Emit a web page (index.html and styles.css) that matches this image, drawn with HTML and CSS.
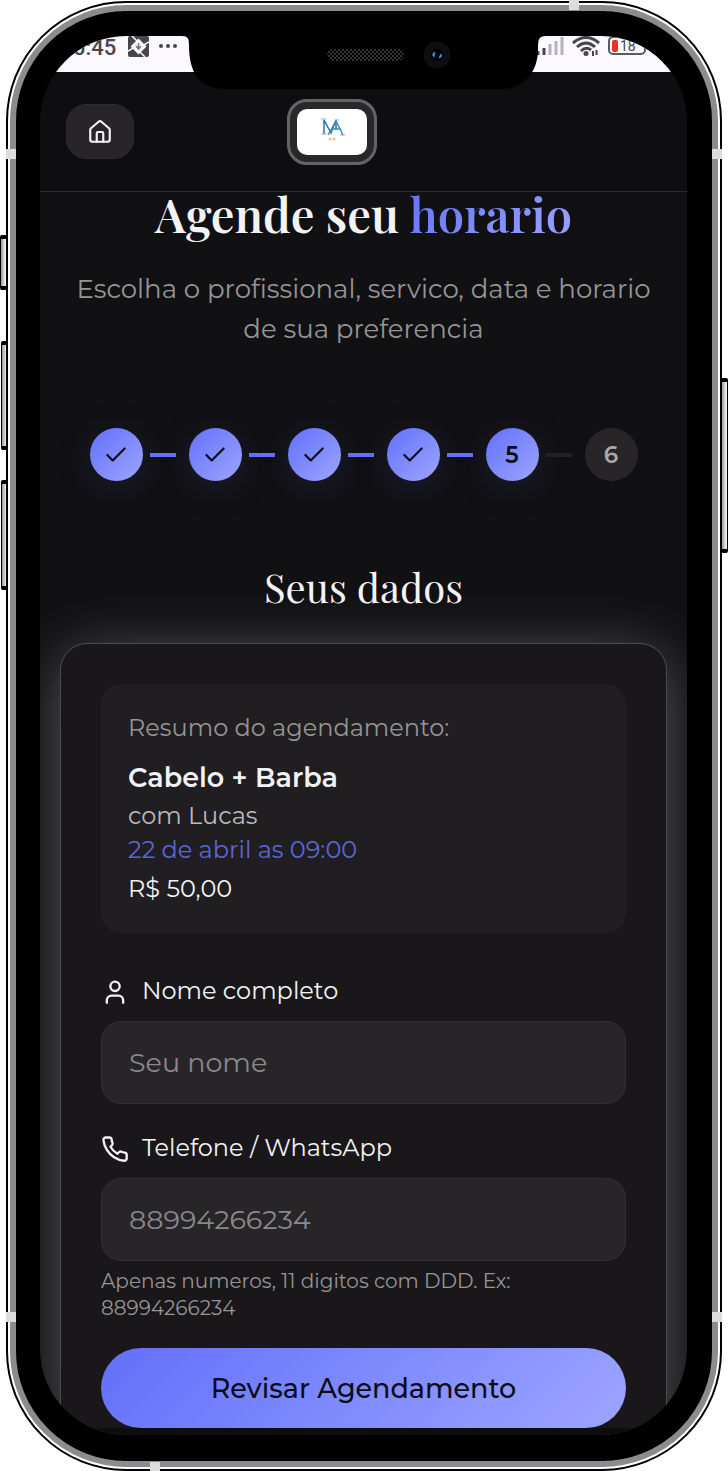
FILE: index.html
```html
<!DOCTYPE html>
<html lang="pt-BR">
<head>
    <meta charset="UTF-8">
    <meta name="viewport" content="width=device-width, initial-scale=1.0">
    <title>Agende seu horario</title>
    <link rel="stylesheet" href="styles.css">
</head>
<body>
    <div class="phone">
        <span class="side-button mute"></span>
        <span class="side-button volume-up"></span>
        <span class="side-button volume-down"></span>
        <span class="side-button power"></span>

        <div class="frame">
            <div class="bezel">
                <div class="screen">
                    <div class="status-bar">
                        <span class="clock">0:45</span>
                        <svg class="status-app" width="21" height="21" viewBox="0 0 21 21">
                            <rect width="21" height="21" rx="2" fill="#47464a"/>
                            <path d="M10.500 2.500l8 8-8 8-8-8z" fill="#fbf9ff"/>
                            <path d="M4 0l6 6M21 6l-7 4M17 21l-6-6M0 15l7-4" stroke="#fbf9ff" stroke-width="1.500"/>
                            <path d="M10.500 7v6M8 10l2.500 3 2.500-3" fill="none" stroke="#77767a" stroke-width="1.500"/>
                        </svg>
                        <svg class="status-dots" width="20" height="6" viewBox="0 0 20 6" fill="#47464a">
                            <circle cx="3" cy="3" r="2"/><circle cx="10" cy="3" r="2"/><circle cx="17" cy="3" r="2"/>
                        </svg>
                        <svg class="status-signal" width="28" height="18" viewBox="0 0 28 18">
                            <path d="M2 18v-4M8 18v-7" stroke="#47464a" stroke-width="3"/>
                            <path d="M14 18V7M20 18V4M26 18V0" stroke="#b5b3b9" stroke-width="3"/>
                        </svg>
                        <svg class="status-wifi" width="28" height="21" viewBox="0 0 28 21" fill="none" stroke="#47464a" stroke-width="3">
                            <path d="M1 7Q14-4 27 7M5 11Q14 3 23 11M9 15Q14 10 19 14"/>
                            <circle cx="14" cy="17.500" r="2.500" fill="#47464a" stroke="none"/>
                            <path d="M21 15v5M24.500 14v5" stroke-width="2"/>
                        </svg>
                        <span class="battery"><i></i>18</span>
                    </div>

                    <header class="topbar">
                        <button class="home-button" type="button" aria-label="Inicio">
                            <svg width="26" height="26" viewBox="0 0 24 24" fill="none" stroke="currentColor" stroke-width="2" stroke-linecap="round" stroke-linejoin="round">
                                <path d="M15 21v-8a1 1 0 0 0-1-1h-4a1 1 0 0 0-1 1v8"/>
                                <path d="M3 10a2 2 0 0 1 .7-1.500l7-6a2 2 0 0 1 2.600 0l7 6A2 2 0 0 1 21 10v9a2 2 0 0 1-2 2H5a2 2 0 0 1-2-2z"/>
                            </svg>
                        </button>
                        <a class="brand" href="#" aria-label="MA">
                            <svg width="70" height="46" viewBox="0 0 70 46" fill="none">
                                <path d="M27 11v14M27 11l7 13 5-13M39 11v10" stroke="#2d70a5" stroke-width="1.500"/>
                                <path d="M31 26l8-14 7 14M35 20h9" stroke="#3e8dbd" stroke-width="1.500"/>
                                <path d="M24 10h5M38 11h4M25 25h4M43 26h5" stroke="#7badd0"/>
                                <circle cx="33" cy="30" r="1.500" fill="#eec07d"/>
                                <circle cx="37" cy="30" r="1.500" fill="#eec07d"/>
                            </svg>
                        </a>
                        <span class="topbar-end"></span>
                    </header>

                    <main class="content">
                        <h1>Agende seu <span>horario</span></h1>
                        <p class="subtitle">Escolha o profissional, servico, data e horario de sua preferencia</p>

                        <div class="steps">
                            <span class="step done"><svg width="26" height="26" viewBox="0 0 24 24"><path d="M20 6L9 17l-5-5"/></svg></span>
                            <span class="line done"></span>
                            <span class="step done"><svg width="26" height="26" viewBox="0 0 24 24"><path d="M20 6L9 17l-5-5"/></svg></span>
                            <span class="line done"></span>
                            <span class="step done"><svg width="26" height="26" viewBox="0 0 24 24"><path d="M20 6L9 17l-5-5"/></svg></span>
                            <span class="line done"></span>
                            <span class="step done"><svg width="26" height="26" viewBox="0 0 24 24"><path d="M20 6L9 17l-5-5"/></svg></span>
                            <span class="line done"></span>
                            <span class="step done">5</span>
                            <span class="line"></span>
                            <span class="step">6</span>
                        </div>

                        <h2>Seus dados</h2>

                        <form class="card">
                            <div class="summary">
                                <p class="summary-title">Resumo do agendamento:</p>
                                <p class="summary-service">Cabelo + Barba</p>
                                <p class="summary-pro">com Lucas</p>
                                <p class="summary-date">22 de abril as 09:00</p>
                                <p class="summary-price">R$ 50,00</p>
                            </div>

                            <div class="field">
                                <label for="nome">
                                    <svg width="28" height="28" viewBox="0 0 24 24"><circle cx="12" cy="8" r="4"/><path d="M19 22v-2a4 4 0 0 0-4-4H9a4 4 0 0 0-4 4v2"/></svg>
                                    Nome completo
                                </label>
                                <input id="nome" type="text" placeholder="Seu nome">
                            </div>

                            <div class="field">
                                <label for="telefone">
                                    <svg width="28" height="28" viewBox="0 0 24 24"><path d="M22 17.920v3a2 2 0 0 1-2.180 2 19.790 19.790 0 0 1-8.630-3.070 19.500 19.500 0 0 1-6-6 19.790 19.790 0 0 1-3.070-8.670A2 2 0 0 1 4.110 3h3a2 2 0 0 1 2 1.720 12.840 12.840 0 0 0 .7 2.810 2 2 0 0 1-.45 2.110L8.090 10.910a16 16 0 0 0 6 6l1.270-1.270a2 2 0 0 1 2.110-.45 12.840 12.840 0 0 0 2.810.7A2 2 0 0 1 22 17.920z"/></svg>
                                    Telefone / WhatsApp
                                </label>
                                <input id="telefone" type="tel" placeholder="88994266234" aria-describedby="telefone-dica">
                                <p class="hint" id="telefone-dica">Apenas numeros, 11 digitos com DDD. Ex: 88994266234</p>
                            </div>

                            <button class="submit" type="submit">Revisar Agendamento</button>
                        </form>
                    </main>
                    <div class="screen-end"></div>

                    <svg class="notch" width="350" height="54" viewBox="0 0 350 54">
                        <defs>
                            <pattern id="mesh" width="4" height="4" patternUnits="userSpaceOnUse">
                                <path d="M0 0l4 4M4 0L0 4" stroke="#333" stroke-width="1"/>
                            </pattern>
                        </defs>
                        <path d="M-7 0C-1 0 0 3 0 9C0 34 8 53 38 53H312C337 53 349 34 349 13C349 3 350 0 357 0V-1H-7z" fill="#000"/>
                        <rect x="138" y="13" width="77" height="12" rx="6" fill="url(#mesh)"/>
                        <circle cx="248" cy="19" r="13.500" fill="#0e0e10"/>
                        <circle cx="248" cy="19" r="6" fill="#000"/>
                        <path d="M246 16q-4 2-1 5zM250 22q4-1 2-4z" fill="#328bd8" stroke="#328bd8"/>
                    </svg>
                </div>
            </div>
        </div>

        <span class="band band-top"></span>
        <span class="band band-bottom"></span>
        <span class="band band-left-up"></span>
        <span class="band band-left-down"></span>
        <span class="band band-right-up"></span>
        <span class="band band-right-down"></span>
    </div>
</body>
</html>
```
FILE: styles.css
```css
:root {
    --primary: #6270fa;
    --primary-light: #9da5ff;
    --gradient: linear-gradient(135deg, var(--primary), var(--primary-light));
    --bg: #111013;
    --card: #19171a;
    --field: #272528;
    --text: #f3f2f4;
    --muted: #969497;
    --dark: #0b0c1c;
    --sans: Montserrat, Inter, sans-serif;
    --serif: "Playfair Display", "Liberation Serif", serif;
}

* {
    margin: 0;
    padding: 0;
    box-sizing: border-box;
}

body {
    background: #fff;
    color: var(--text);
    font-family: var(--sans);
}

/* Phone body */
.phone {
    position: relative;
    padding: 1px 6px;
}

.frame {
    position: relative;
    padding: 2px;
    background: #fff;
    border: 2px solid #000;
    border-radius: 120px;
}

.bezel {
    background: #000;
    border: 6px solid #8d8b8e;
    border-radius: 116px;
    padding: 25px 25px 26px 24px;
}

.screen {
    position: relative;
    overflow: hidden;
    background: var(--bg);
    border-radius: 86px;
}

.side-button {
    position: absolute;
    width: 7px;
    border: 1px solid #000;
    border-top-width: 4px;
    border-bottom-width: 4px;
    border-radius: 2px;
    background: linear-gradient(90deg, #999, #fff);
}

.mute {
    left: 0;
    top: 235px;
    height: 55px;
}

.volume-up {
    left: 1px;
    top: 341px;
    height: 109px;
}

.volume-down {
    left: 1px;
    top: 480px;
    height: 110px;
}

.power {
    right: 0;
    top: 378px;
    height: 175px;
}

.band {
    position: absolute;
    width: 10px;
    height: 10px;
    background: #dddcdc;
}

.band-top { top: 0; right: 149px; }
.band-bottom { bottom: 0; left: 150px; }
.band-left-up { top: 149px; left: 6px; }
.band-right-up { top: 149px; right: 6px; }
.band-left-down { bottom: 150px; left: 6px; }
.band-right-down { bottom: 150px; right: 6px; }

.notch {
    position: absolute;
    top: 0;
    left: 50%;
    margin-left: -175px;
    overflow: visible;
}

/* Status bar */
.status-bar {
    height: 36px;
    padding: 0 41px 0 33px;
    display: flex;
    align-items: flex-start;
    background: #fbf9ff;
    color: #47464a;
    font-family: Roboto, sans-serif;
}

.clock {
    font-size: 22px;
    line-height: 24px;
    font-weight: 500;
}

.status-app {
    margin-left: 12px;
}

.status-dots {
    margin: 7px 0 0 9px;
}

.status-signal {
    margin: 1px 0 0 auto;
}

.status-wifi {
    margin-left: 8px;
}

.battery {
    display: flex;
    align-items: center;
    gap: 2px;
    width: 38px;
    height: 19px;
    margin-left: 8px;
    padding-left: 2px;
    border: 2px solid #5b5a5e;
    border-radius: 5px;
    font-size: 14px;
}

.battery i {
    width: 6px;
    height: 12px;
    border-radius: 2px;
    background: #ed2f25;
}

/* Header */
.topbar {
    height: 120px;
    padding: 0 26px;
    display: flex;
    align-items: center;
    justify-content: space-between;
    background: #0e0d10;
    border-bottom: 1px solid #2c2b2e;
}

.home-button {
    width: 68px;
    height: 55px;
    display: flex;
    align-items: center;
    justify-content: center;
    color: var(--text);
    background: var(--field);
    border: 1px solid #2d2b2e;
    border-radius: 20px;
}

.brand {
    display: flex;
    padding: 7px;
    background: #29272a;
    border: 3px solid #646366;
    border-radius: 20px;
}

.brand svg {
    background: #fff;
    border-radius: 10px;
}

.topbar-end {
    width: 131px;
}

/* Content */
.content {
    padding: 0 20px;
}

h1 {
    font-family: var(--serif);
    font-size: 47px;
    line-height: 56px;
    font-weight: 600;
    text-align: center;
    margin-top: -6px;
}

h1 span {
    color: transparent;
    background: var(--gradient);
    background-clip: text;
    -webkit-background-clip: text;
}

.subtitle {
    margin-top: 27px;
    color: var(--muted);
    font-size: 26px;
    line-height: 40px;
    text-align: center;
}

.steps {
    display: flex;
    align-items: center;
    justify-content: center;
    margin-top: 79px;
}

.step {
    width: 53px;
    height: 53px;
    display: flex;
    align-items: center;
    justify-content: center;
    border-radius: 50%;
    background: var(--field);
    color: #aaa8ab;
    font-size: 23px;
    font-weight: 600;
}

.step.done {
    background: var(--gradient);
    color: var(--dark);
    box-shadow: 0 6px 36px rgba(98, 112, 250, 0.15);
}

.step svg {
    fill: none;
    stroke: currentColor;
    stroke-width: 2;
    stroke-linecap: round;
    stroke-linejoin: round;
}

.line {
    width: 26px;
    height: 4px;
    margin: 0 13px 0 7px;
    background: #222124;
}

.line.done {
    background: var(--primary);
}

h2 {
    margin-top: 79px;
    font-family: var(--serif);
    font-size: 40px;
    line-height: 54px;
    font-weight: 400;
    text-align: center;
}

.card {
    margin-top: 29px;
    padding: 40px 40px 0;
    background: var(--card);
    border: 1px solid #4b4a4d;
    border-bottom: none;
    border-radius: 27px 27px 0 0;
    box-shadow: 0 10px 60px rgba(255, 255, 255, 0.3);
}

.summary {
    padding: 27px;
    border-radius: 20px;
    background: #201e21;
    font-size: 24px;
    line-height: 34px;
}

.summary-title {
    color: var(--muted);
}

.summary-service {
    margin-top: 16px;
    font-size: 27px;
    font-weight: 600;
}

.summary-pro {
    margin-top: 4px;
    color: #bbb9bc;
}

.summary-date {
    color: #5c66d8;
}

.summary-price {
    margin-top: 5px;
}

.field {
    margin-top: 27px;
}

.summary + .field {
    margin-top: 41px;
}

.field label {
    display: flex;
    align-items: center;
    gap: 13px;
    font-size: 24px;
    line-height: 34px;
}

.field label svg {
    fill: none;
    stroke: currentColor;
    stroke-width: 2;
    stroke-linecap: round;
    stroke-linejoin: round;
}

.field input {
    display: block;
    width: 100%;
    height: 83px;
    margin-top: 13px;
    padding: 0 27px;
    color: var(--text);
    background: var(--field);
    border: 1px solid #323033;
    border-radius: 20px;
    font-family: inherit;
    font-size: 27px;
    outline: none;
}

.field input::placeholder {
    color: #8a888b;
}

.field input:focus {
    border-color: var(--primary);
}

.hint {
    margin-top: 7px;
    color: var(--muted);
    font-size: 20px;
    line-height: 27px;
}

.submit {
    width: 100%;
    height: 80px;
    margin-top: 26px;
    display: block;
    border: none;
    border-radius: 40px;
    background: var(--gradient);
    color: var(--dark);
    font-family: inherit;
    font-size: 27px;
    font-weight: 500;
    cursor: pointer;
}

.screen-end {
    position: relative;
    height: 7px;
    background: #0d0c0f;
}
```
